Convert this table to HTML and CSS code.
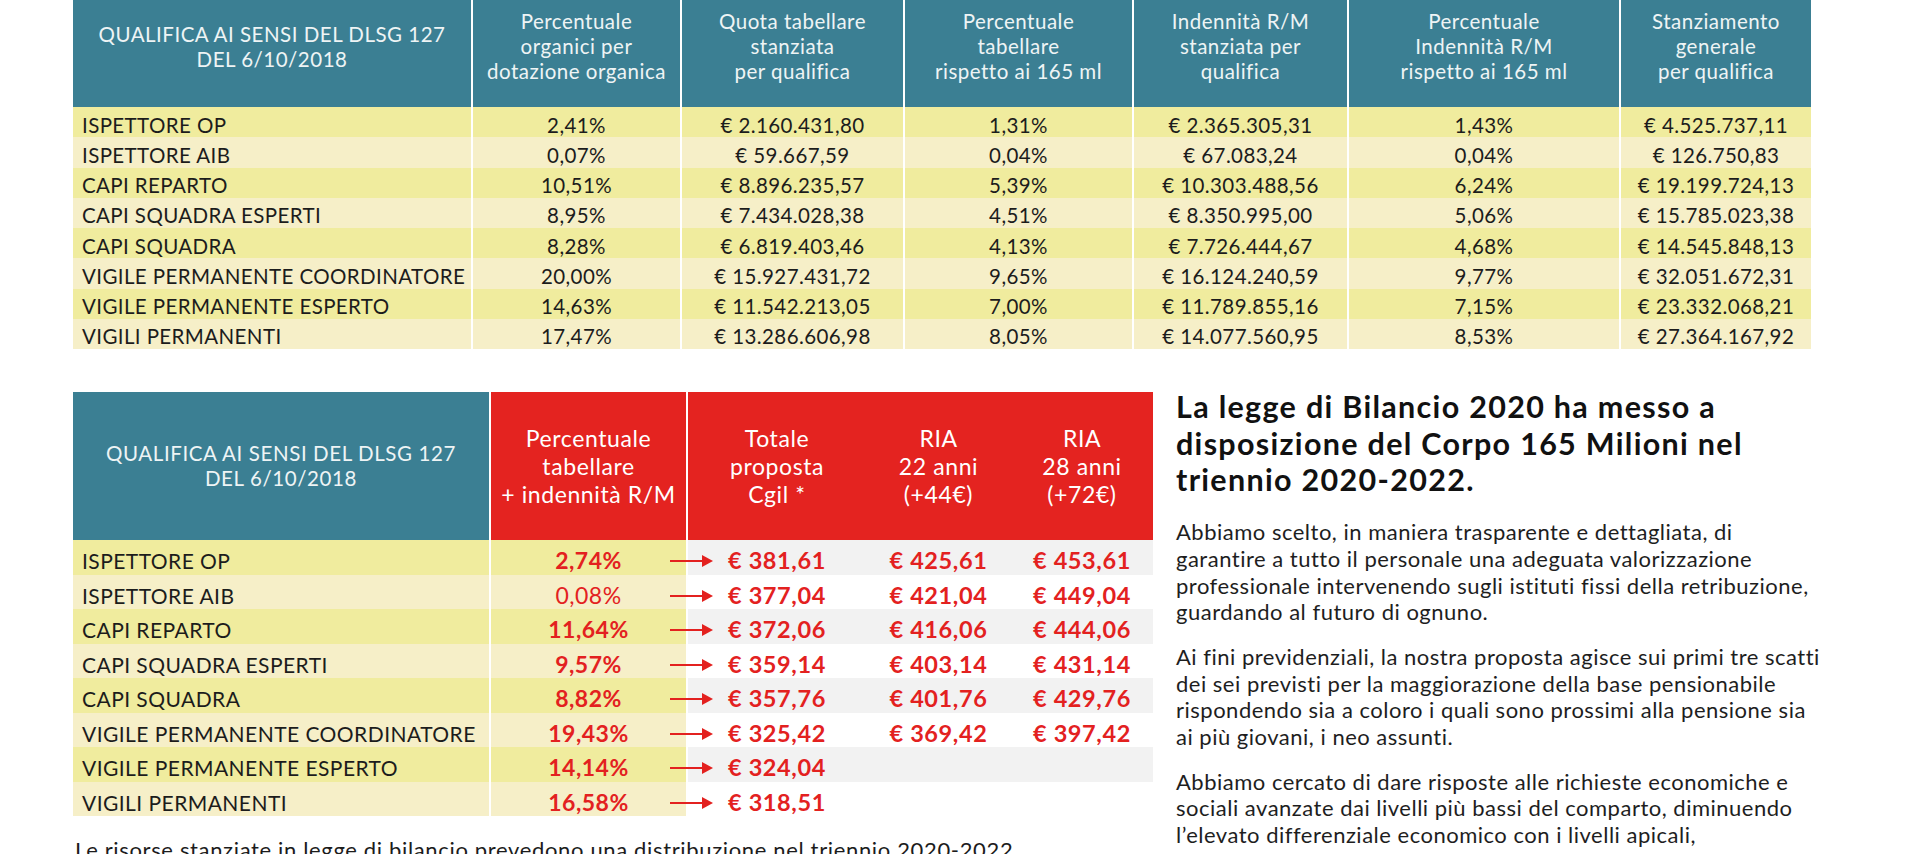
FILE: index.html
```html
<!DOCTYPE html>
<html lang="it">
<head>
<meta charset="utf-8">
<title>Ripartizione 165 milioni</title>
<link rel="stylesheet" href="styles.css">
</head>
<body>
<div class="page">
  <div class="t1">
    <div class="t1-row t1-head">
      <div class="hc hc-first">QUALIFICA AI SENSI DEL DLSG 127<br>DEL 6/10/2018</div>
      <div class="hc">Percentuale<br>organici per<br>dotazione organica</div>
      <div class="hc">Quota tabellare<br>stanziata<br>per qualifica</div>
      <div class="hc">Percentuale<br>tabellare<br>rispetto ai 165 ml</div>
      <div class="hc">Indennità R/M<br>stanziata per<br>qualifica</div>
      <div class="hc">Percentuale<br>Indennità R/M<br>rispetto ai 165 ml</div>
      <div class="hc">Stanziamento<br>generale<br>per qualifica</div>
    </div>
    <div class="t1-row y"><div class="c l">ISPETTORE OP</div><div class="c">2,41%</div><div class="c">€ 2.160.431,80</div><div class="c">1,31%</div><div class="c">€ 2.365.305,31</div><div class="c">1,43%</div><div class="c">€ 4.525.737,11</div></div>
    <div class="t1-row k"><div class="c l">ISPETTORE AIB</div><div class="c">0,07%</div><div class="c">€ 59.667,59</div><div class="c">0,04%</div><div class="c">€ 67.083,24</div><div class="c">0,04%</div><div class="c">€ 126.750,83</div></div>
    <div class="t1-row y"><div class="c l">CAPI REPARTO</div><div class="c">10,51%</div><div class="c">€ 8.896.235,57</div><div class="c">5,39%</div><div class="c">€ 10.303.488,56</div><div class="c">6,24%</div><div class="c">€ 19.199.724,13</div></div>
    <div class="t1-row k"><div class="c l">CAPI SQUADRA ESPERTI</div><div class="c">8,95%</div><div class="c">€ 7.434.028,38</div><div class="c">4,51%</div><div class="c">€ 8.350.995,00</div><div class="c">5,06%</div><div class="c">€ 15.785.023,38</div></div>
    <div class="t1-row y"><div class="c l">CAPI SQUADRA</div><div class="c">8,28%</div><div class="c">€ 6.819.403,46</div><div class="c">4,13%</div><div class="c">€ 7.726.444,67</div><div class="c">4,68%</div><div class="c">€ 14.545.848,13</div></div>
    <div class="t1-row k"><div class="c l">VIGILE PERMANENTE COORDINATORE</div><div class="c">20,00%</div><div class="c">€ 15.927.431,72</div><div class="c">9,65%</div><div class="c">€ 16.124.240,59</div><div class="c">9,77%</div><div class="c">€ 32.051.672,31</div></div>
    <div class="t1-row y"><div class="c l">VIGILE PERMANENTE ESPERTO</div><div class="c">14,63%</div><div class="c">€ 11.542.213,05</div><div class="c">7,00%</div><div class="c">€ 11.789.855,16</div><div class="c">7,15%</div><div class="c">€ 23.332.068,21</div></div>
    <div class="t1-row k"><div class="c l">VIGILI PERMANENTI</div><div class="c">17,47%</div><div class="c">€ 13.286.606,98</div><div class="c">8,05%</div><div class="c">€ 14.077.560,95</div><div class="c">8,53%</div><div class="c">€ 27.364.167,92</div></div>
  </div>

  <div class="lower">
    <div class="left">
      <div class="t2">
        <div class="t2-row t2-head">
          <div class="hc hc-first">QUALIFICA AI SENSI DEL DLSG 127<br>DEL 6/10/2018</div>
          <div class="hr">Percentuale<br>tabellare<br>+ indennità R/M</div>
          <div class="hr-group">
            <div class="hr hr-in">Totale<br>proposta<br>Cgil *</div>
            <div class="hr hr-in">RIA<br>22 anni<br>(+44€)</div>
            <div class="hr hr-in">RIA<br>28 anni<br>(+72€)</div>
          </div>
        </div>
        <div class="t2-row body y g"><div class="c l">ISPETTORE OP</div><div class="c p">2,74%</div><div class="vals"><div class="v tot"><svg class="arrow" viewBox="0 0 43 14" width="43" height="14"><path d="M0 7H33" stroke="#e3211f" stroke-width="2"/><path d="M32 1L43 7L32 13Z" fill="#e3211f"/></svg>€ 381,61</div><div class="v">€ 425,61</div><div class="v">€ 453,61</div></div></div>
        <div class="t2-row body k"><div class="c l">ISPETTORE AIB</div><div class="c p light">0,08%</div><div class="vals"><div class="v tot"><svg class="arrow" viewBox="0 0 43 14" width="43" height="14"><path d="M0 7H33" stroke="#e3211f" stroke-width="2"/><path d="M32 1L43 7L32 13Z" fill="#e3211f"/></svg>€ 377,04</div><div class="v">€ 421,04</div><div class="v">€ 449,04</div></div></div>
        <div class="t2-row body y g"><div class="c l">CAPI REPARTO</div><div class="c p">11,64%</div><div class="vals"><div class="v tot"><svg class="arrow" viewBox="0 0 43 14" width="43" height="14"><path d="M0 7H33" stroke="#e3211f" stroke-width="2"/><path d="M32 1L43 7L32 13Z" fill="#e3211f"/></svg>€ 372,06</div><div class="v">€ 416,06</div><div class="v">€ 444,06</div></div></div>
        <div class="t2-row body k"><div class="c l">CAPI SQUADRA ESPERTI</div><div class="c p">9,57%</div><div class="vals"><div class="v tot"><svg class="arrow" viewBox="0 0 43 14" width="43" height="14"><path d="M0 7H33" stroke="#e3211f" stroke-width="2"/><path d="M32 1L43 7L32 13Z" fill="#e3211f"/></svg>€ 359,14</div><div class="v">€ 403,14</div><div class="v">€ 431,14</div></div></div>
        <div class="t2-row body y g"><div class="c l">CAPI SQUADRA</div><div class="c p">8,82%</div><div class="vals"><div class="v tot"><svg class="arrow" viewBox="0 0 43 14" width="43" height="14"><path d="M0 7H33" stroke="#e3211f" stroke-width="2"/><path d="M32 1L43 7L32 13Z" fill="#e3211f"/></svg>€ 357,76</div><div class="v">€ 401,76</div><div class="v">€ 429,76</div></div></div>
        <div class="t2-row body k"><div class="c l">VIGILE PERMANENTE COORDINATORE</div><div class="c p">19,43%</div><div class="vals"><div class="v tot"><svg class="arrow" viewBox="0 0 43 14" width="43" height="14"><path d="M0 7H33" stroke="#e3211f" stroke-width="2"/><path d="M32 1L43 7L32 13Z" fill="#e3211f"/></svg>€ 325,42</div><div class="v">€ 369,42</div><div class="v">€ 397,42</div></div></div>
        <div class="t2-row body y g"><div class="c l">VIGILE PERMANENTE ESPERTO</div><div class="c p">14,14%</div><div class="vals"><div class="v tot"><svg class="arrow" viewBox="0 0 43 14" width="43" height="14"><path d="M0 7H33" stroke="#e3211f" stroke-width="2"/><path d="M32 1L43 7L32 13Z" fill="#e3211f"/></svg>€ 324,04</div><div class="v"></div><div class="v"></div></div></div>
        <div class="t2-row body k"><div class="c l">VIGILI PERMANENTI</div><div class="c p">16,58%</div><div class="vals"><div class="v tot"><svg class="arrow" viewBox="0 0 43 14" width="43" height="14"><path d="M0 7H33" stroke="#e3211f" stroke-width="2"/><path d="M32 1L43 7L32 13Z" fill="#e3211f"/></svg>€ 318,51</div><div class="v"></div><div class="v"></div></div></div>
      </div>
      <p class="note">Le risorse stanziate in legge di bilancio prevedono una distribuzione nel triennio 2020-2022</p>
    </div>

    <div class="right">
      <h1 class="title">La legge di Bilancio 2020 ha messo a<br>disposizione del Corpo 165 Milioni nel<br>triennio 2020-2022.</h1>
      <p class="txt">Abbiamo scelto, in maniera trasparente e dettagliata, di<br>garantire a tutto il personale una adeguata valorizzazione<br>professionale intervenendo sugli istituti fissi della retribuzione,<br>guardando al futuro di ognuno.</p>
      <p class="txt">Ai fini previdenziali, la nostra proposta agisce sui primi tre scatti<br>dei sei previsti per la maggiorazione della base pensionabile<br>rispondendo sia a coloro i quali sono prossimi alla pensione sia<br>ai più giovani, i neo assunti.</p>
      <p class="txt">Abbiamo cercato di dare risposte alle richieste economiche e<br>sociali avanzate dai livelli più bassi del comparto, diminuendo<br>l’elevato differenziale economico con i livelli apicali,</p>
    </div>
  </div>
</div>
</body>
</html>
```

FILE: styles.css
```css
* { box-sizing: border-box; }
html, body { margin: 0; padding: 0; background: #ffffff; }
body {
  font-family: Lato, "Open Sans", "Liberation Sans", sans-serif;
  color: #1c1c1c;
  width: 1920px;
  height: 854px;
  overflow: hidden;
}
.page { padding-left: 73px; }

/* ---------- top table ---------- */
.t1 { width: 1738px; }
.t1-row {
  display: grid;
  grid-template-columns: 398px 207px 221px 227px 213px 270px 190px;
  column-gap: 2px;
  background: #ffffff;
}
.t1-head { height: 107px; }
.hc {
  background: #3b7f93;
  color: #eef4f5;
  font-size: 20.5px;
  letter-spacing: 0.5px;
  line-height: 25px;
  text-align: center;
  display: flex;
  align-items: center;
  justify-content: center;
  padding-bottom: 14px;
}
.t1-row .c {
  height: 30.25px;
  font-size: 20.5px;
  letter-spacing: 0.4px;
  display: flex;
  align-items: center;
  justify-content: center;
  padding-top: 5px;
  white-space: nowrap;
}
.y .c { background: #f0ec9e; }
.k .c { background: #f6efc8; }
.t1-row .c.l { justify-content: flex-start; padding-left: 9px; }

/* ---------- lower section ---------- */
.lower {
  display: flex;
  margin-top: 43px;
}
.left { width: 1080px; }
.t2-row {
  display: grid;
  grid-template-columns: 416px 195px 465px;
  column-gap: 2px;
}
.t2-row.body { height: 34.5px; }
.t2-head { height: 148px; }
.t2-head .hc { padding-bottom: 0; font-size: 20.5px; line-height: 25.5px; letter-spacing: 0.6px; }
.hr {
  background: #e42320;
  color: #ffffff;
  font-size: 23px;
  letter-spacing: 0.6px;
  line-height: 28px;
  text-align: center;
  display: flex;
  align-items: center;
  justify-content: center;
}
.hr-group {
  display: grid;
  grid-template-columns: 178px 145px 142px;
  background: #e42320;
}
.t2-row .c {
  height: 34.5px;
  font-size: 21px;
  line-height: 1;
  letter-spacing: 0.45px;
  display: flex;
  align-items: center;
  justify-content: center;
  padding-top: 7px;
  white-space: nowrap;
}
.t2-row .c.l { justify-content: flex-start; padding-left: 9px; }
.t2-row .c.p { color: #e3211f; font-weight: 700; font-size: 23px; letter-spacing: 0.5px; }
.t2-row .c.p.light { font-weight: 400; }
.vals {
  display: grid;
  grid-template-columns: 178px 145px 142px;
  height: 34.5px;
  background: #ffffff;
}
.g .vals { background: #f2f2f2; }
.v {
  position: relative;
  height: 34.5px;
  color: #e3211f;
  font-weight: 700;
  font-size: 23.5px;
  line-height: 1;
  letter-spacing: 0.6px;
  display: flex;
  align-items: center;
  justify-content: center;
  padding-top: 7px;
  white-space: nowrap;
}
.arrow {
  position: absolute;
  left: -18px;
  top: 14px;
}
.note {
  margin: 20px 0 0 2px;
  font-size: 22px;
  line-height: 28px;
  letter-spacing: 0.65px;
  white-space: nowrap;
  color: #1c1c1c;
}

/* ---------- right text ---------- */
.right {
  margin-left: 23px;
  margin-top: -4px;
}
.title {
  margin: 0;
  font-size: 30.5px;
  letter-spacing: 1.3px;
  line-height: 36.7px;
  font-weight: 700;
  color: #111111;
  white-space: nowrap;
}
.txt {
  margin: 21px 0 0 0;
  font-size: 22px;
  letter-spacing: 0.5px;
  line-height: 26.7px;
  color: #1e1e1e;
  white-space: nowrap;
}
.txt + .txt { margin-top: 18px; }
```
